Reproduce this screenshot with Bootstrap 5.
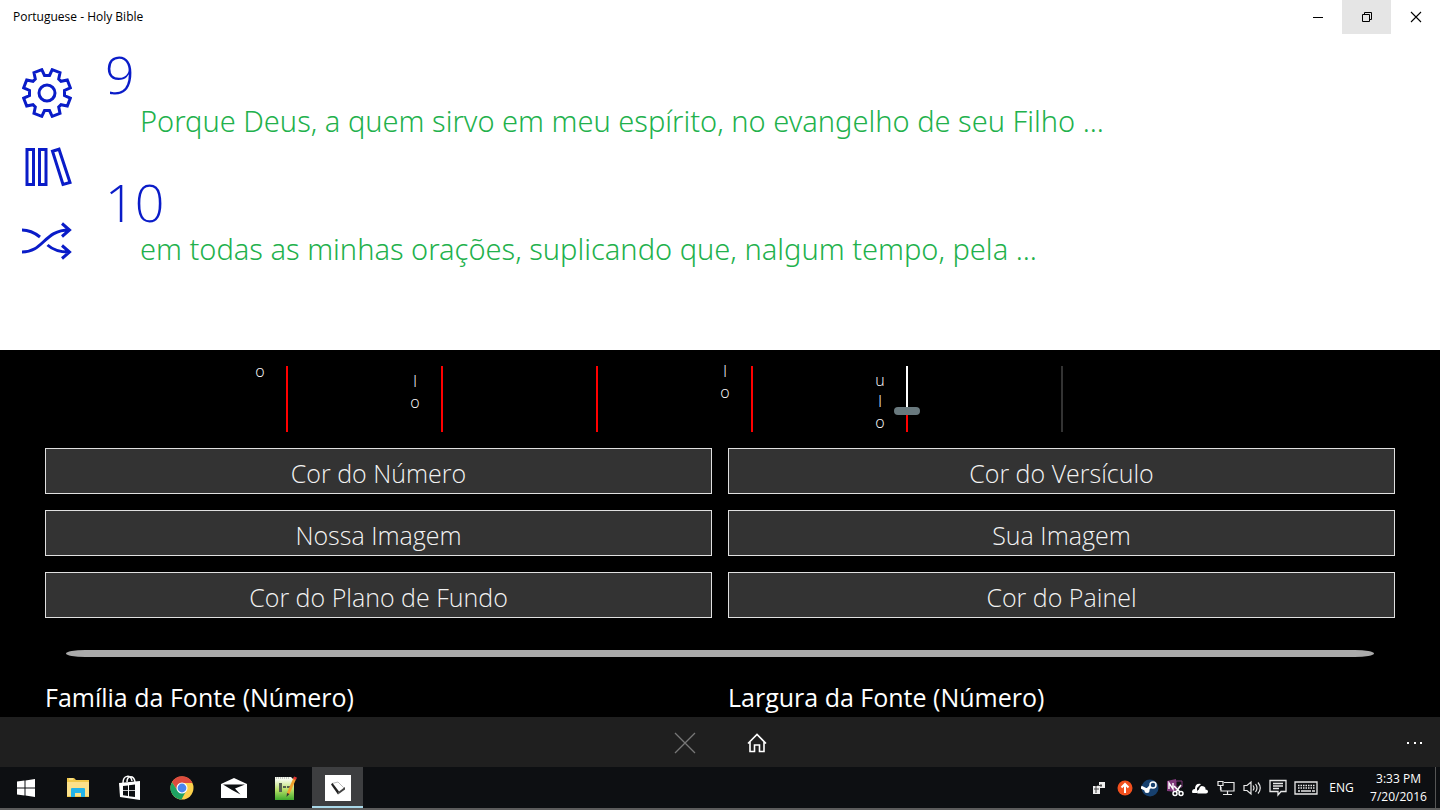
<!DOCTYPE html>
<html lang="pt">
<head>
<meta charset="utf-8">
<meta name="viewport" content="width=device-width, initial-scale=1">
<title>Portuguese - Holy Bible</title>
<link href="https://cdn.jsdelivr.net/npm/bootstrap@5.3.0/dist/css/bootstrap.min.css" rel="stylesheet">
<style>
  body { font-family: "Open Sans", "Noto Sans", sans-serif; background: #fff; color: #000; }
  svg { display: block; }
  .bare { border: 0; padding: 0; background: none; color: inherit; display: flex; align-items: center; justify-content: center; flex: none; }

  .title-bar { height: 34px; font-size: 12px; padding-left: 13px; }
  .title-bar .bare { width: 49px; height: 34px; }
  .title-bar .hovered { background: #e5e5e5; }

  .side-tools { width: 94px; padding-top: 34px; gap: 24px; color: #0a1cc8; }
  .side-tools .bare { width: 50px; height: 50px; }
  .verses { padding: 10px 0 0 11px; }
  .verse { height: 128px; margin: 0; }
  .verse-number { font-size: 52px; line-height: 60px; font-weight: 300; color: #0a1cc8; }
  .verse-text { font-family: "Noto Sans", "Open Sans", sans-serif; font-size: 29px; line-height: 42px; font-weight: 300; color: #22b14c; padding-left: 35px; margin-top: -4px; }

  .options { background: #000; color: #fff; padding: 16px 45px 0; height: 367px; overflow: hidden; }
  .sliders { height: 66px; padding-left: 100px; }
  .slider-field { width: 155px; flex: none; gap: 4px; }
  .slider-field label { font-size: 16px; line-height: 21px; text-align: center; width: 20px; font-weight: 300; }
  .up-0 { margin-bottom: -1px; }
  .up-1 { margin-bottom: 19px; }
  .up-2 { margin-bottom: 29px; }
  .up-3 { margin-bottom: 50px; }
  .level-view { height: 66px; overflow: hidden; }
  .level { appearance: none; -webkit-appearance: none; writing-mode: vertical-lr; direction: rtl; width: 26px; height: 110px; flex: none; margin: 0;
    background: linear-gradient(to top, red var(--fill), #fff var(--fill)) center / 2px 100% no-repeat; }
  .level:disabled { background: linear-gradient(#333, #333) center / 2px 100% no-repeat; }
  .level::-webkit-slider-thumb { -webkit-appearance: none; appearance: none; width: 26px; height: 8px; border-radius: 4px; background: #69797e; border: 0; }

  .choice { height: 46px; border: 1px solid #e0e0e0; border-radius: 0; background: #333; color: #f2f2f2; font-size: 25px; line-height: 30px; font-weight: 300; padding: 9px 0 5px; }
  .choice:hover { background: #444; color: #fff; border-color: #fff; }
  .divider { height: 7px; margin: 32px 21px 20px; border-radius: 22px / 4px; background: #aaa; }
  .group-title { font-size: 25px; line-height: 40px; margin: 0; font-weight: 400; }

  .command-bar { height: 50px; background: #1f1f1f; color: #fff; padding: 1px 0 0 1px; }
  .command-bar .bare { width: 72px; height: 50px; }
  .command-bar .more { width: 50px; }
  .command-side { flex: 1 1 0; }

  .task-bar { height: 43px; background: #0d0f12; color: #fff; border-bottom: 2px solid #5c5c5c; }
  .task-bar .bare { width: 51px; height: 41px; }
  .task-bar .running { background: #3d3e40; box-shadow: inset 0 -2px #a9d8e8; }
  .task-bar .tray-app { width: 25px; }
  .task-bar .tray-sys { width: 26px; }
  .task-bar .tray-key { width: 30px; }
  .task-bar .tray-lang { width: 41px; font-size: 12px; }
  .task-bar .tray-clock { width: 73px; font-size: 12px; line-height: 18px; flex-direction: column; }
  .peek { width: 5px; border-left: 1px solid #555; }
</style>
</head>
<body>
<div class="d-flex flex-column min-vh-100">

  <header class="title-bar d-flex align-items-center">
    <span class="flex-fill">Portuguese - Holy Bible</span>
    <button class="bare" type="button" aria-label="Minimize"><svg width="12" height="12" stroke="#000"><path d="M1 6.500h10"/></svg></button>
    <button class="bare hovered" type="button" aria-label="Restore"><svg width="12" height="12" fill="none" stroke="#000"><path d="M1.500 3.500h7v7h-7zM3.500 3.500v-2h7v7h-2"/></svg></button>
    <button class="bare" type="button" aria-label="Close"><svg width="12" height="12" fill="none" stroke="#000" stroke-width="1.100"><path d="M1 1l10 10M11 1L1 11"/></svg></button>
  </header>

  <main class="d-flex flex-fill">
    <nav class="side-tools d-flex flex-column align-items-center">
      <button class="bare" type="button" aria-label="Definições">
        <svg width="50" height="50" fill="none" stroke="currentColor" stroke-width="3"><circle cx="25" cy="25" r="8"/><path d="M27.500 7.500L30.200 1.700 38 4.700 36.700 11 39 13.300 45.300 12 48.300 19.800 42.500 22.500V27.500L48.300 30.200 45.300 38 39 36.700 36.700 39 38 45.300 30.200 48.300 27.500 42.500H22.500L19.800 48.300 12 45.300 13.300 39 11 36.700 4.700 38 1.700 30.200 7.500 27.500V22.500L1.700 19.800 4.700 12 11 13.300 13.300 11 12 4.700 19.800 1.700 22.500 7.500z"/></svg>
      </button>
      <button class="bare" type="button" aria-label="Livros">
        <svg width="50" height="50" fill="none" stroke="currentColor" stroke-width="3"><path d="M5 7.500h6.500v35H5zM17.500 7.500H24v35h-6.500zM30.500 9.200l6.500-2 11 33.300-7 2z"/></svg>
      </button>
      <button class="bare" type="button" aria-label="Aleatório">
        <svg width="50" height="50" fill="none" stroke="currentColor" stroke-width="3"><path d="M0 36c22 0 22-22 47-22M0 14c8 0 13 3 18 7M25.500 29c5 4.500 12 7 21 7M40 7.500l7.500 6.500-7.500 6.500M40 29.500l7.500 6.500-7.500 6.500"/></svg>
      </button>
    </nav>
    <section class="verses flex-fill">
      <div class="verse"><div class="verse-number">9</div><div class="verse-text">Porque Deus, a quem sirvo em meu espírito, no evangelho de seu Filho ...</div></div>
      <div class="verse"><div class="verse-number">10</div><div class="verse-text">em todas as minhas orações, suplicando que, nalgum tempo, pela ...</div></div>
    </section>
  </main>

  <section class="options">
    <div class="sliders d-flex mb-3">
      <div class="slider-field d-flex justify-content-end align-items-end"><label class="up-3" for="s1">o</label><div class="level-view d-flex align-items-end"><input class="level" id="s1" type="range" value="100" style="--fill:100%"></div></div>
      <div class="slider-field d-flex justify-content-end align-items-end"><label class="up-1" for="s2">l<br>o</label><div class="level-view d-flex align-items-end"><input class="level" id="s2" type="range" value="100" style="--fill:100%"></div></div>
      <div class="slider-field d-flex justify-content-end align-items-end"><div class="level-view d-flex align-items-end"><input class="level" id="s3" type="range" value="100" style="--fill:100%" aria-label="3"></div></div>
      <div class="slider-field d-flex justify-content-end align-items-end"><label class="up-2" for="s4">l<br>o</label><div class="level-view d-flex align-items-end"><input class="level" id="s4" type="range" value="100" style="--fill:100%"></div></div>
      <div class="slider-field d-flex justify-content-end align-items-end"><label class="up-0" for="s5">u<br>l<br>o</label><div class="level-view d-flex align-items-end"><input class="level" id="s5" type="range" value="17" style="--fill:20%"></div></div>
      <div class="slider-field d-flex justify-content-end align-items-end"><div class="level-view d-flex align-items-end"><input class="level" id="s6" type="range" value="100" disabled aria-label="6"></div></div>
    </div>
    <div class="row g-3">
      <div class="col-6"><button class="btn choice w-100" type="button">Cor do Número</button></div>
      <div class="col-6"><button class="btn choice w-100" type="button">Cor do Versículo</button></div>
      <div class="col-6"><button class="btn choice w-100" type="button">Nossa Imagem</button></div>
      <div class="col-6"><button class="btn choice w-100" type="button">Sua Imagem</button></div>
      <div class="col-6"><button class="btn choice w-100" type="button">Cor do Plano de Fundo</button></div>
      <div class="col-6"><button class="btn choice w-100" type="button">Cor do Painel</button></div>
    </div>
    <div class="divider"></div>
    <div class="row gx-3">
      <div class="col-6"><h2 class="group-title">Família da Fonte (Número)</h2></div>
      <div class="col-6"><h2 class="group-title">Largura da Fonte (Número)</h2></div>
    </div>
  </section>

  <div class="command-bar d-flex">
    <div class="command-side"></div>
    <button class="bare" type="button" aria-label="Cancelar"><svg width="22" height="22" fill="none" stroke="#777" stroke-width="1.300"><path d="M1 1l20 20M21 1L1 21"/></svg></button>
    <button class="bare" type="button" aria-label="Início"><svg width="20" height="20" fill="none" stroke="#fff" stroke-width="1.600"><path d="M1 10.500L10 1.500l9 9M3 9v9.500h4.500v-6.500h5v6.500H17V9"/></svg></button>
    <div class="command-side d-flex justify-content-end"><button class="bare more" type="button" aria-label="Mais"><svg width="16" height="4" fill="#fff"><path d="M0 1h2v2H0zM7 1h2v2H7zM13 1h2v2h-2z"/></svg></button></div>
  </div>

  <footer class="task-bar d-flex">
    <div class="d-flex flex-fill" style="gap:1px">
      <button class="bare" type="button" aria-label="Start"><svg width="18" height="18" fill="#fff"><path d="M0 2.600l7.500-1v7H0zM8.500 1.400L18 0v8.600H8.500zM0 9.500h7.500v7L0 15.500zM8.500 9.500H18V18l-9.500-1.400z"/></svg></button>
      <button class="bare" type="button" aria-label="File Explorer"><svg width="24" height="22"><path d="M1 1h7l2 2h13v17H1z" fill="#f0c84b"/><path d="M1 5h22v14H1z" fill="#fbe08a"/><path d="M3 2h4" stroke="#fff3c0"/><path d="M5 20v-8q0-1 1-1h12q1 0 1 1v8h-4v-4H9v4z" fill="#23b3e8"/></svg></button>
      <button class="bare" type="button" aria-label="Store"><svg width="24" height="26"><path d="M5 8c0-8 8-9 9-2M9 7c0-7 7-7 8 0" fill="none" stroke="#fff" stroke-width="1.500"/><path d="M1 8l21-2v19L2 22z" fill="#fff"/><path d="M5 11l5-.6v4.800H5zM11 10.300l6-.8v5.700h-6zM5 16h5v5l-5-.8zM11 16h6v6l-6-.8z" fill="#0d0f12"/></svg></button>
      <button class="bare" type="button" aria-label="Chrome"><svg width="24" height="24" viewBox="0 0 24 24"><circle cx="12" cy="12" r="11.500" fill="#fcd04b"/><path d="M2 6.200A11.500 11.500 0 0 1 22.500 7H12L7.600 14.500z" fill="#dd4b3e"/><path d="M2 6.200A11.500 11.500 0 0 0 11.500 23.500L16.400 14.600 12 17l-4.500-2.500z" fill="#1ea362"/><circle cx="12" cy="12" r="5.500" fill="#fff"/><circle cx="12" cy="12" r="4.400" fill="#4a86ee"/></svg></button>
      <button class="bare" type="button" aria-label="Mail"><svg width="26" height="22"><path d="M0 7L13 1l13 6v14H0z" fill="#fff"/><path d="M2 7.500h22L14 11.500l5.500 6L11 13z" fill="#0d0f12"/></svg></button>
      <button class="bare" type="button" aria-label="Notepad++"><svg width="24" height="26"><defs><linearGradient id="pad" x2="0" y2="1"><stop offset=".1" stop-color="#f6fbef"/><stop offset=".55" stop-color="#b9e069"/><stop offset="1" stop-color="#3faa2c"/></linearGradient></defs><path d="M1 2h16l3 3v20H1z" fill="url(#pad)"/><path d="M2 3h14" stroke="#999" stroke-dasharray="1 1"/><path d="M5 8h3v9H5zM9 11h3v2H9zM13 11h3v2h-3z" fill="#556050"/><path d="M21 3L14 19" stroke="#f0a12b" stroke-width="3"/><path d="M21.500 2l-1 2.500" stroke="#d33" stroke-width="3"/><path d="M13 18l2.500 1-3 3z" fill="#333"/></svg></button>
      <button class="bare running" type="button" aria-label="Holy Bible"><svg width="26" height="26"><path d="M0 0h26v26H0z" fill="#fff"/><path d="M7 8.500l6-1.500 6 6-5.500 5.500z" fill="#fff" stroke="#bbb"/><path d="M6 9.500L7.500 8 14 16.500l-1 3z" fill="#222"/><path d="M13 19.500l7-5v-2.500l-6 4.500z" fill="#444"/></svg></button>
    </div>
    <button class="bare tray-app" type="button" aria-label="Devices"><svg width="14" height="14"><path d="M0 5h7v8H0zM6 1h6v6H6z" fill="#eee"/><path d="M1 8h5M3 5v7M8 3v3M4 4.500h5" stroke="#444"/></svg></button>
    <button class="bare tray-app" type="button" aria-label="Updater"><svg width="16" height="16"><circle cx="8" cy="8" r="7.500" fill="#f2501e"/><path d="M8 13V4M4.500 7.500L8 4l3.500 3.500" fill="none" stroke="#fff" stroke-width="2"/></svg></button>
    <button class="bare tray-app" type="button" aria-label="Steam"><svg width="18" height="18"><circle cx="9" cy="9" r="8.500" fill="#17406e"/><path d="M0 8l6 3 5-5" fill="none" stroke="#fff" stroke-width="3"/><circle cx="12" cy="6" r="3" fill="#17406e" stroke="#fff" stroke-width="1.500"/><circle cx="6" cy="11.500" r="2.500" fill="#fff"/></svg></button>
    <button class="bare tray-app" type="button" aria-label="OneNote clipper"><svg width="18" height="18"><path d="M1 2l9-2v13L1 12z" fill="#80397b"/><path d="M10 2h6v6h-6z" fill="none" stroke="#80397b"/><path d="M3 10V4l4 6V4" fill="none" stroke="#fff" stroke-width="1.400"/><path d="M8 7l6 6M15 6l-5 7" stroke="#fff" stroke-width="1.600"/><g fill="none" stroke="#fff" stroke-width="1.500"><circle cx="9" cy="14.500" r="2"/><circle cx="15" cy="14.500" r="2"/></g></svg></button>
    <button class="bare tray-sys" type="button" aria-label="OneDrive"><svg width="16" height="12" fill="#fff"><path d="M0 10q0-3 3-3 0-6 6-5L5 6v5H1q-1 0-1-1z"/><path d="M5.500 11.500q-1.500-3 1.500-4 1-5 5-3 2 1 1.500 3 2.500 0 2.500 2t-2 2z"/></svg></button>
    <button class="bare tray-sys" type="button" aria-label="Network"><svg width="18" height="16" fill="none" stroke="#e8e8e8" stroke-width="1.200"><path d="M7 2.500h10v8.500H4V7M10.500 11v3M6 14.500h9M1 1.500h5v4H1zM3.500 5.500V10"/></svg></button>
    <button class="bare tray-sys" type="button" aria-label="Volume"><svg width="18" height="16" fill="none" stroke="#e8e8e8" stroke-width="1.200"><path d="M1 5.500h3L8 2v12L4 10.500H1zM10 5.500q2 2.500 0 5M12.500 4q3 4 0 8M15 2.500q4.500 5.500 0 11"/></svg></button>
    <button class="bare tray-sys" type="button" aria-label="Notifications"><svg width="18" height="18" fill="none" stroke="#e8e8e8" stroke-width="1.300"><path d="M1 1.500h16v11h-5L9 16v-3.500H1zM4 4.500h10M4 7h10M4 9.500h6"/></svg></button>
    <button class="bare tray-key" type="button" aria-label="Keyboard"><svg width="24" height="14" fill="none" stroke="#e8e8e8" stroke-width="1.300"><path d="M1 1h22v12H1z"/><path d="M4 4.500h17M4 7h17" stroke-dasharray="1.500 1"/><path d="M4 10h2M7 10h10M18 10h3"/></svg></button>
    <button class="bare tray-lang" type="button">ENG</button>
    <button class="bare tray-clock" type="button"><span>3:33 PM</span><span>7/20/2016</span></button>
    <div class="peek"></div>
  </footer>
</div>
<script src="https://cdn.jsdelivr.net/npm/bootstrap@5.3.0/dist/js/bootstrap.bundle.min.js"></script>
</body>
</html>
